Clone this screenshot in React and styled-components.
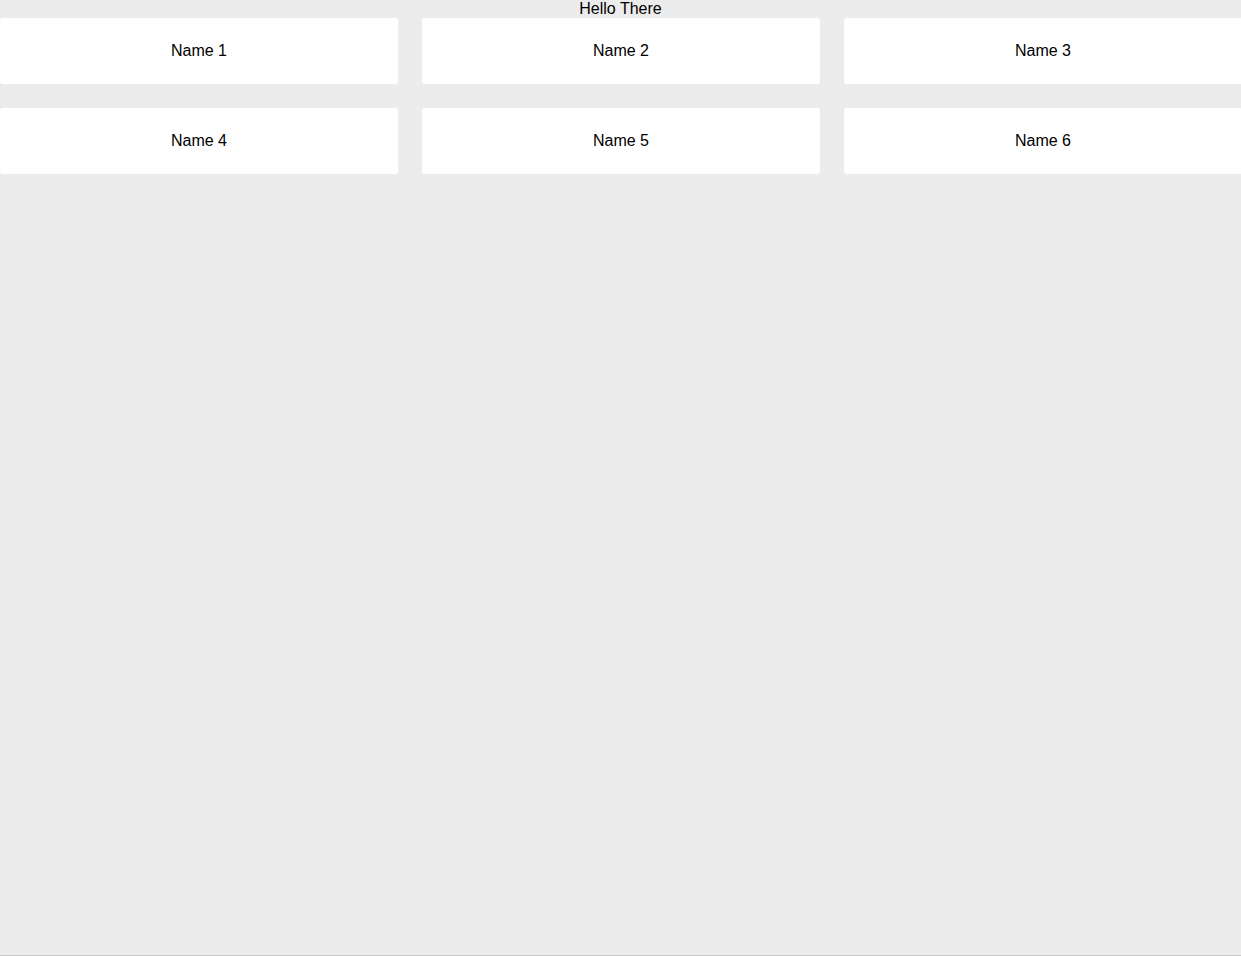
import styled, { createGlobalStyle } from 'styled-components'

const GlobalStyle = createGlobalStyle`
    html, body {
        margin: 0;
        padding: 0;
        background: #fff;
        font-family: "Liberation Sans", Arial, sans-serif;
        font-size: 16px;
        color: #000;
    }
`

const Page = styled.div`
    height: 955px;
    background: #ececec;
    border-bottom: 1px solid #c8c8c8;
    overflow: hidden;
`

const Title = styled.div`
    text-align: center;
    line-height: 18px;
    height: 18px;
`

const Grid = styled.div`
    display: grid;
    grid-template-columns: repeat(3, 398px);
    grid-auto-rows: 66px;
    column-gap: 24px;
    row-gap: 24px;
`

const Card = styled.div`
    background: #fff;
    border-radius: 3px;
    display: flex;
    align-items: center;
    justify-content: center;
    padding-bottom: 1px;
`

const names = ['Name 1', 'Name 2', 'Name 3', 'Name 4', 'Name 5', 'Name 6']

export default function App() {
    return <>
        <GlobalStyle />
        <Page>
            <Title>Hello There</Title>
            <Grid>
                {names.map((name, key) => <Card key={key}>{name}</Card>)}
            </Grid>
        </Page>
    </>
}
